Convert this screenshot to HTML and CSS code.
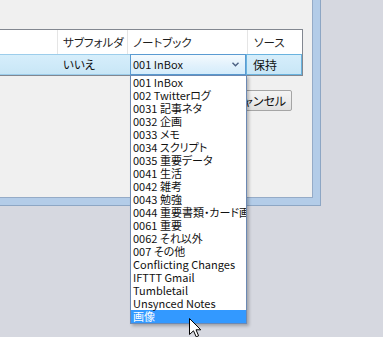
FILE: index.html
```html
<!DOCTYPE html>
<html lang="ja">
<head>
  <meta charset="UTF-8">
  <title>ノートブック選択</title>
  <link rel="stylesheet" href="styles.css">
</head>
<body>
  <div class="frame">
    <div class="client">
      <div class="list">
        <div class="head">
          <div class="cell"></div>
          <div class="cell">サブフォルダ</div>
          <div class="cell">ノートブック</div>
          <div class="cell">ソース</div>
        </div>
        <div class="row selected">
          <div class="cell"></div>
          <div class="cell">いいえ</div>
          <div class="cell">
            <div class="combo">
              <span>001 InBox</span>
              <svg class="chevron" width="7" height="5" viewBox="0 0 7 5">
                <polyline points="0.5,0.8 3.5,3.8 6.5,0.8" fill="none" stroke="#4a5f82" stroke-width="1.4"/>
              </svg>
            </div>
          </div>
          <div class="cell source">保持</div>
        </div>
        <div class="rest">
          <div class="cell"></div>
          <div class="cell"></div>
          <div class="cell"></div>
          <div class="cell"></div>
        </div>
      </div>
      <div class="buttons">
        <button class="btn">キャンセル</button>
      </div>
    </div>
  </div>

  <ul class="dropdown">
    <li>001 InBox</li>
    <li>002 Twitterログ</li>
    <li>0031 記事ネタ</li>
    <li>0032 企画</li>
    <li>0033 メモ</li>
    <li>0034 スクリプト</li>
    <li>0035 重要データ</li>
    <li>0041 生活</li>
    <li>0042 雑考</li>
    <li>0043 勉強</li>
    <li>0044 重要書類・カード画像</li>
    <li>0061 重要</li>
    <li>0062 それ以外</li>
    <li>007 その他</li>
    <li>Conflicting Changes</li>
    <li>IFTTT Gmail</li>
    <li>Tumbletail</li>
    <li>Unsynced Notes</li>
    <li class="active">画像</li>
  </ul>

  <svg class="cursor" width="13" height="20" viewBox="0 0 13 20">
    <polygon points="0.5,0.5 0.5,16.5 4.5,12.8 7.2,18.8 9.6,17.8 7,11.8 11.8,11.8" fill="#fff" stroke="#000" stroke-width="1" stroke-linejoin="miter"/>
  </svg>
</body>
</html>
```

FILE: styles.css
```css
body {
  margin: 0;
  position: relative;
  background: #d6d8e0;
  font-family: "Noto Sans CJK JP", "Noto Sans", sans-serif;
  font-feature-settings: "palt";
  font-size: 11px;
  color: #111;
  overflow: hidden;
  width: 383px;
  height: 337px;
}
.frame {
  width: fit-content;
  background: #b3cce8;
  padding: 0 7px 7px 0;
  border-right: 1px solid #8da6c4;
  border-bottom: 1px solid #8da6c4;
}
.client {
  width: 312px;
  height: 197px;
  background: #f0f0f0;
  border-right: 1px solid #95abc7;
  border-bottom: 1px solid #95abc7;
  display: flex;
  flex-direction: column;
}
.list {
  margin-top: 29px;
  width: 302px;
  background: #fff;
  border-top: 1px solid #828790;
  border-right: 1px solid #828790;
  border-bottom: 1px solid #828790;
  display: flex;
  flex-direction: column;
}
.head, .rest {
  display: grid;
  grid-template-columns: 57px 70px 120px 1fr;
}
.head {
  height: 24px;
  color: #1e1e1e;
  font-size: 11.5px;
}
.head .cell {
  padding: 5px 0 0 5px;
  line-height: 14px;
}
.head .cell + .cell, .rest .cell + .cell {
  border-left: 1px solid #e5e5e5;
}
.head .cell:nth-child(4) {
  padding-left: 6px;
}
.row {
  display: grid;
  grid-template-columns: 57px 70px 119px 1fr;
  height: 21px;
  box-sizing: border-box;
  background: linear-gradient(#d6eefb, #c8e6f6);
  border-top: 1px solid #9ccdeb;
  border-bottom: 1px solid #9ccdeb;
  font-size: 11.5px;
}
.row .cell {
  line-height: 19px;
  padding-left: 6px;
}
.row .cell:nth-child(3) {
  padding-left: 3px;
}
.combo {
  box-sizing: border-box;
  margin-top: -1px;
  height: 21px;
  border: 1px solid #5a9bd2;
  background: linear-gradient(#f4fafe, #e3f2fc 50%, #d4ecfb);
  display: flex;
  align-items: center;
  justify-content: space-between;
  padding: 0 6px 0 2px;
  line-height: 19px;
  font-size: 11px;
}
.chevron {
  display: block;
}
.row .source {
  margin-top: -1px;
  height: 21px;
  box-sizing: border-box;
  border: 1px solid #69b3df;
  padding-left: 6px;
  font-size: 12px;
}
.rest {
  flex: 1;
}
.rest .cell + .cell {
  border-left-color: #f0f0f0;
}
.buttons {
  display: flex;
  justify-content: flex-end;
  padding: 14px 20px 0 0;
}
.btn {
  width: 66px;
  height: 21px;
  padding: 0;
  font: inherit;
  font-size: 12px;
  color: #111;
  border: 1px solid #a5a5a5;
  border-radius: 2px;
  background: linear-gradient(#f4f4f4, #ececec 50%, #e0e0e0);
}
.dropdown {
  position: absolute;
  left: 130px;
  top: 75px;
  width: 115px;
  margin: 0;
  padding: 0;
  list-style: none;
  background: #fff;
  border: 1px solid #6c89b3;
  box-shadow: 2px 2px 3px rgba(0, 0, 0, 0.25);
  overflow: hidden;
}
.dropdown li {
  height: 13px;
  line-height: 13px;
  padding-left: 2px;
  white-space: nowrap;
  color: #111;
}
.dropdown li.active {
  background: #3399ff;
  color: #fff;
}
.cursor {
  position: absolute;
  left: 189px;
  top: 318px;
}
```
